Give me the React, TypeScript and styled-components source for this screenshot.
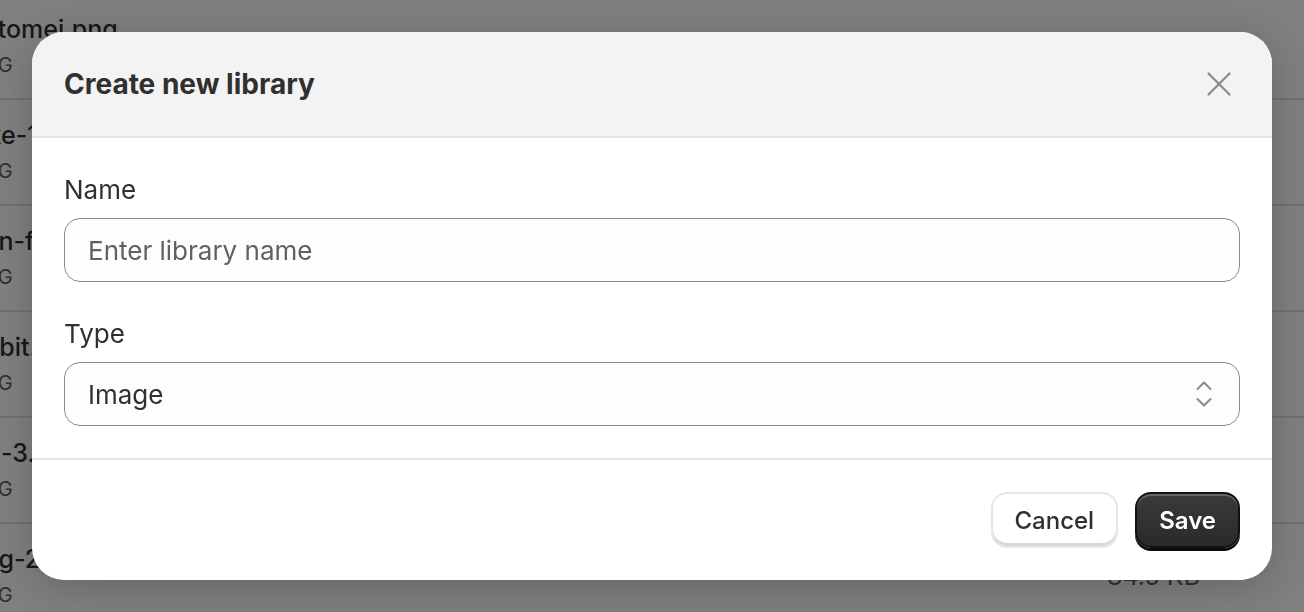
import React from "react";
import styled, { createGlobalStyle } from "styled-components";

const GlobalStyle = createGlobalStyle`
  * { box-sizing: border-box; }
  html, body {
    margin: 0;
    padding: 0;
    width: 100%;
    height: 100%;
    overflow: hidden;
    background: #ffffff;
    font-family: Inter, "Noto Sans", "Liberation Sans", sans-serif;
    color: #303030;
  }
`;

const FileList = styled.div`
  margin-left: -30px;
  margin-top: -6px;
  display: flex;
  flex-direction: column;
`;

const FileRow = styled.div`
  height: 106px;
  display: flex;
  align-items: center;
  justify-content: space-between;
  padding: 0 104px 0 0;
  border-bottom: 2px solid #e3e3e3;
`;

const FileMeta = styled.div`
  display: flex;
  flex-direction: column;
  gap: 6px;
`;

const FileName = styled.div`
  font-size: 25px;
  line-height: 32px;
  font-weight: 500;
  color: #303030;
`;

const FileType = styled.div`
  font-size: 20px;
  line-height: 28px;
  color: #616161;
`;

const FileSize = styled.div`
  font-size: 25px;
  line-height: 32px;
  color: #616161;
`;

const Backdrop = styled.div`
  position: fixed;
  inset: 0;
  background: rgba(0, 0, 0, 0.5);
  display: flex;
  padding: 32px;
`;

const Modal = styled.div`
  width: 100%;
  height: 548px;
  background: #ffffff;
  border-radius: 32px;
  overflow: hidden;
  display: flex;
  flex-direction: column;
  box-shadow: 0 8px 40px rgba(0, 0, 0, 0.2);
`;

const Header = styled.div`
  height: 106px;
  flex-shrink: 0;
  background: #f3f3f3;
  border-bottom: 2px solid #e3e3e3;
  display: flex;
  align-items: center;
  justify-content: space-between;
  padding: 0 33px 0 32px;
`;

const Title = styled.h2`
  margin: 0;
  font-size: 28px;
  line-height: 40px;
  font-weight: 650;
  color: #303030;
`;

const CloseButton = styled.button`
  width: 40px;
  height: 40px;
  border: none;
  background: transparent;
  padding: 0;
  display: flex;
  align-items: center;
  justify-content: center;
  cursor: pointer;
`;

const Body = styled.div`
  padding: 32px;
  display: flex;
  flex-direction: column;
  gap: 32px;
  border-bottom: 2px solid #e3e3e3;
`;

const Field = styled.div`
  display: flex;
  flex-direction: column;
  gap: 8px;
`;

const Label = styled.label`
  font-size: 26px;
  line-height: 40px;
  color: #303030;
`;

const TextInput = styled.input`
  height: 64px;
  width: 100%;
  border: 1px solid #8a8a8a;
  border-radius: 16px;
  background: #fdfdfd;
  padding: 0 23px;
  font-family: inherit;
  font-size: 26px;
  color: #303030;
  outline: none;

  &::placeholder {
    color: #616161;
  }
`;

const SelectBox = styled.div`
  height: 64px;
  width: 100%;
  border: 1px solid #8a8a8a;
  border-radius: 16px;
  background: #fdfdfd;
  padding: 0 27px 0 23px;
  display: flex;
  align-items: center;
  justify-content: space-between;
  font-size: 26px;
  color: #303030;
`;

const Footer = styled.div`
  flex: 1;
  display: flex;
  align-items: center;
  justify-content: flex-end;
  gap: 17px;
  padding: 0 32px;
`;

const Button = styled.button<{ $primary?: boolean }>`
  height: 56px;
  padding: 0 22px;
  border-radius: 16px;
  font-family: inherit;
  font-size: 24px;
  font-weight: ${({ $primary }) => ($primary ? 600 : 500)};
  cursor: pointer;
  color: ${({ $primary }) => ($primary ? "#ffffff" : "#303030")};
  background: ${({ $primary }) =>
    $primary ? "linear-gradient(180deg, #3a3a3a 0%, #2a2a2a 100%)" : "#ffffff"};
  border: ${({ $primary }) => ($primary ? "2px solid #121212" : "2px solid #e6e6e6")};
  box-shadow: ${({ $primary }) =>
    $primary
      ? "inset 0 2px 0 rgba(255,255,255,0.22), 0 3px 0 #0c0c0c"
      : "inset 0 -3px 0 #d8d8d8"};
`;

const files = [
  { name: "satomei.png", size: "" },
  { name: "Axe-1.png", size: "" },
  { name: "Fan-fish.png", size: "" },
  { name: "Orbit.png", size: "" },
  { name: "bg-3.png", size: "" },
  { name: "img-2.png", size: "84.5 KB" },
];

const CloseIcon = () => (
  <svg width="24" height="24" viewBox="0 0 24 24" fill="none">
    <path d="M1.5 1.5 L22.5 22.5 M22.5 1.5 L1.5 22.5" stroke="#8a8a8a" strokeWidth="2.2" strokeLinecap="round" />
  </svg>
);

const SelectIcon = () => (
  <svg width="16" height="28" viewBox="0 0 16 28" fill="none">
    <path d="M1.5 9 L8 2.5 L14.5 9 M1.5 19 L8 25.5 L14.5 19" stroke="#8a8a8a" strokeWidth="2" strokeLinecap="round" strokeLinejoin="round" />
  </svg>
);

export default function App() {
  return (
    <>
      <GlobalStyle />
      <FileList>
        {files.map((f) => (
          <FileRow key={f.name}>
            <FileMeta>
              <FileName>{f.name}</FileName>
              <FileType>PNG</FileType>
            </FileMeta>
            <FileSize>{f.size}</FileSize>
          </FileRow>
        ))}
      </FileList>
      <Backdrop>
        <Modal>
          <Header>
            <Title>Create new library</Title>
            <CloseButton aria-label="Close">
              <CloseIcon />
            </CloseButton>
          </Header>
          <Body>
            <Field>
              <Label>Name</Label>
              <TextInput placeholder="Enter library name" />
            </Field>
            <Field>
              <Label>Type</Label>
              <SelectBox>
                <span>Image</span>
                <SelectIcon />
              </SelectBox>
            </Field>
          </Body>
          <Footer>
            <Button>Cancel</Button>
            <Button $primary>Save</Button>
          </Footer>
        </Modal>
      </Backdrop>
    </>
  );
}
